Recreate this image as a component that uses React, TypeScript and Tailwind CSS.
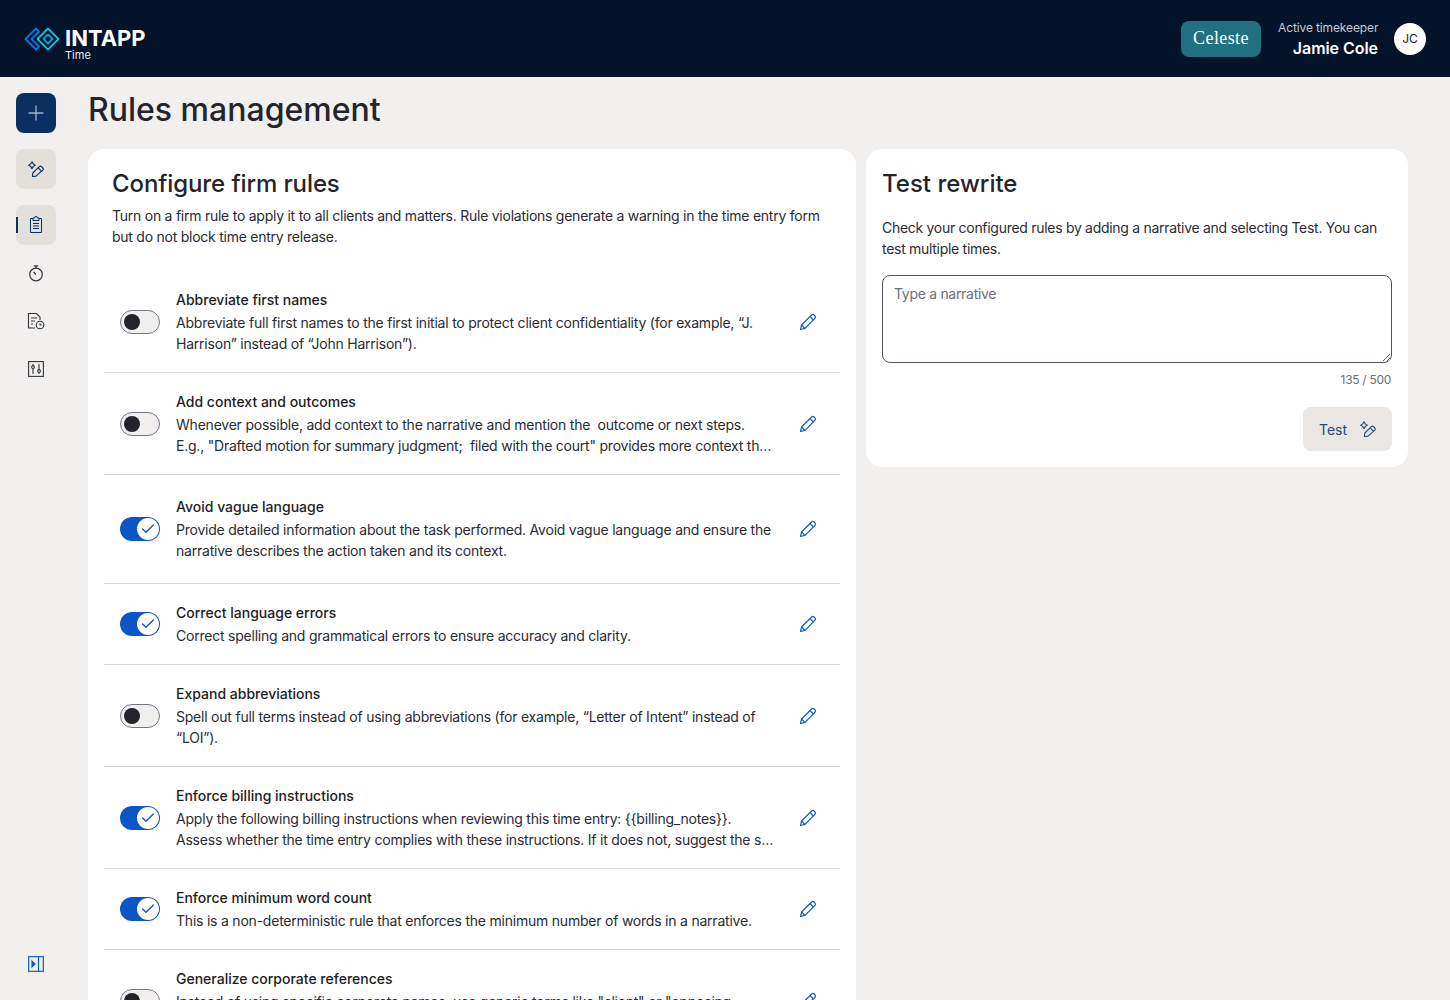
import React from "react";
import { Check, Plus } from "lucide-react";

const rules = [
  { title: "Abbreviate first names", on: false, h: "h-[102px]", lines: ["Abbreviate full first names to the first initial to protect client confidentiality (for example, “J.", "Harrison” instead of “John Harrison”)."] },
  { title: "Add context and outcomes", on: false, h: "h-[102px]", lines: ["Whenever possible, add context to the narrative and mention the  outcome or next steps.", "E.g., \"Drafted motion for summary judgment;  filed with the court\" provides more context than \"Drafted motion\""] },
  { title: "Avoid vague language", on: true, h: "h-[109px]", lines: ["Provide detailed information about the task performed. Avoid vague language and ensure the", "narrative describes the action taken and its context."] },
  { title: "Correct language errors", on: true, h: "h-[81px]", lines: ["Correct spelling and grammatical errors to ensure accuracy and clarity."] },
  { title: "Expand abbreviations", on: false, h: "h-[102px]", lines: ["Spell out full terms instead of using abbreviations (for example, “Letter of Intent” instead of", "“LOI”)."] },
  { title: "Enforce billing instructions", on: true, h: "h-[102px]", lines: ["Apply the following billing instructions when reviewing this time entry: {{billing_notes}}.", "Assess whether the time entry complies with these instructions. If it does not, suggest the specific changes"] },
  { title: "Enforce minimum word count", on: true, h: "h-[81px]", lines: ["This is a non-deterministic rule that enforces the minimum number of words in a narrative."] },
  { title: "Generalize corporate references", on: false, h: "h-[102px]", lines: ["Instead of using specific corporate names, use generic terms like \"client\" or \"opposing", "party\" where the identity of the company is not needed."] },
];

function Sparkle({ className }: { className?: string }) {
  return (
    <svg viewBox="0 0 16 16" fill="none" stroke="currentColor" strokeWidth="1.1" strokeLinejoin="round" strokeLinecap="round" className={className}>
      <path d="M4 .8 5.3 2.9 7.3 4.2 5.3 5.4 4 7.6 2.7 5.4 .7 4.2 2.7 2.9Z" />
      <path d="M4.4 15.5 4.8 12 11.4 5.7a1.5 1.5 0 0 1 2.1 0l1.3 1.3a1.5 1.5 0 0 1 0 2.1L8 15.1Z" />
      <path d="M10.2 6.9 13.6 10.3" />
    </svg>
  );
}

function Pencil() {
  return (
    <svg viewBox="0 0 18 18" fill="none" stroke="#0b5cc9" strokeWidth="1.2" strokeLinejoin="round" className="w-[18px] h-[18px]">
      <path d="M1.5 16.5 2.6 12 12.6 2a1.8 1.8 0 0 1 2.5 0l.8.8a1.8 1.8 0 0 1 0 2.5L6 15.4Z" />
      <path d="M11 3.6 14.4 7M2.6 12 6 15.4" />
    </svg>
  );
}

function Toggle({ on }: { on: boolean }) {
  if (on) {
    return (
      <div className="w-10 h-6 rounded-full bg-[#0b55c4] flex items-center justify-end px-[1px] shrink-0">
        <div className="w-[22px] h-[22px] rounded-full bg-white flex items-center justify-center">
          <Check className="w-4 h-4 text-[#0b55c4]" strokeWidth={2} />
        </div>
      </div>
    );
  }
  return (
    <div className="w-10 h-6 rounded-full bg-[#f1efed] border border-[#77758a] flex items-center px-[3px] shrink-0">
      <div className="w-4 h-4 rounded-full bg-[#23232b]" />
    </div>
  );
}

function Row({ rule, last }: { rule: (typeof rules)[number]; last: boolean }) {
  return (
    <div className={`${rule.h} flex items-center pl-4 pr-[23px] shrink-0 ${last ? "" : "border-b border-[#d9d8de]"}`}>
      <Toggle on={rule.on} />
      <div className="ml-4 w-[600px] min-w-0">
        <div className="text-[14px] leading-[20px] font-medium text-[#1d1d24] mb-[2px]">{rule.title}</div>
        {rule.lines.map((line, i) => (
          <div key={i} className="text-[14px] leading-[21px] text-[#2b2b33] truncate whitespace-pre tracking-[-0.22px]">{line}</div>
        ))}
      </div>
      <div className="ml-auto"><Pencil /></div>
    </div>
  );
}

function SideIcon({ active, marker, children }: { active?: boolean; marker?: boolean; children: React.ReactNode }) {
  return (
    <div className="relative w-10 h-10 flex items-center justify-center">
      {marker && <div className="absolute left-0 top-[12px] w-[2px] h-4 bg-[#0a2f61]" />}
      <div className={`w-10 h-10 rounded-lg flex items-center justify-center text-[#0a2f61] ${active ? "bg-[#e3dfdb]" : ""}`}>
        {children}
      </div>
    </div>
  );
}

export default function App() {
  return (
    <div className="h-screen overflow-hidden bg-[#f1f0ee] flex flex-col font-['Inter',sans-serif]">
      <header className="h-[77px] shrink-0 bg-[#02132a] flex items-center pl-6 pr-6">
        <svg viewBox="0 0 36 24" fill="none" strokeWidth="1.8" strokeLinejoin="round" className="w-9 h-6">
          <path d="M12 1.5 1.5 12 12 22.5 15 19.5 7.5 12 15 4.5Z" stroke="#0b78e3" />
          <path d="M24 1.5 34.5 12 24 22.5 13.5 12Z" stroke="#13c4cf" />
          <path d="M24 7.5 28.5 12 24 16.5 19.5 12Z" stroke="#0b9fe0" />
        </svg>
        <div className="ml-[5px] text-white">
          <div className="text-[22px] leading-[22px] font-bold mt-[10px]">INTAPP</div>
          <div className="text-[11px] leading-[12px] text-[#e8ecf2]">Time</div>
        </div>
        <div className="ml-auto flex items-center">
          <div className="w-20 h-9 rounded-lg bg-[#20707f] text-white flex items-center justify-center text-[18px] font-['Liberation_Serif',serif] tracking-[0.4px]">Celeste</div>
          <div className="ml-[17px] w-[100px] text-right mt-[2px]">
            <div className="text-[12px] leading-[16px] text-[#c6cbd3] tracking-[-0.12px] whitespace-nowrap">Active timekeeper</div>
            <div className="text-[16px] leading-[22px] font-semibold text-white mt-[1px] tracking-[-0.05px]">Jamie Cole</div>
          </div>
          <div className="ml-4 w-8 h-8 rounded-full bg-white text-[#1d1d24] text-[12px] flex items-center justify-center">JC</div>
        </div>
      </header>

      <div className="flex flex-1 min-h-0">
        <aside className="w-[72px] shrink-0 pl-4 pt-4 pb-4 flex flex-col">
          <div className="w-10 h-10 rounded-lg bg-[#0a2f61] flex items-center justify-center">
            <Plus className="w-6 h-6 text-[#9fb2c9]" strokeWidth={1.3} />
          </div>
          <div className="mt-4"><SideIcon active><Sparkle className="w-4 h-4" /></SideIcon></div>
          <div className="mt-4"><SideIcon active marker>
            <svg viewBox="0 0 20 20" fill="none" stroke="currentColor" strokeWidth="1" className="w-5 h-5">
              <path d="M7 3.5H4.5v14h11v-14H13" />
              <path d="M7 5.5V3h1.5a1.5 1.5 0 0 1 3 0H13v2.5Z" />
              <path d="M7 8.5h6M7 11h6M7 13.5h6" />
            </svg>
          </SideIcon></div>
          <div className="mt-2"><div className="w-10 h-10 flex items-center justify-center">
            <svg viewBox="0 0 20 20" fill="none" stroke="#33333b" strokeWidth="1.2" className="w-5 h-5">
              <circle cx="10" cy="11.5" r="6.3" />
              <path d="M7.8 2.8h4.4M10 2.8v2.4M7.6 9l2.4 2.5" />
            </svg>
          </div></div>
          <div className="mt-2"><div className="w-10 h-10 flex items-center justify-center">
            <svg viewBox="0 0 20 20" fill="none" stroke="#33333b" strokeWidth="1.1" className="w-5 h-5">
              <path d="M9 17H2.5V2.5h8L14 6v3" />
              <path d="M5 7h6M5 10h4M5 13h2" />
              <circle cx="14" cy="14" r="3.8" />
              <path d="M14 12.2V14h1.6" />
            </svg>
          </div></div>
          <div className="mt-2"><div className="w-10 h-10 flex items-center justify-center">
            <svg viewBox="0 0 16 16" fill="none" stroke="#33333b" strokeWidth="1.1" className="w-4 h-4">
              <rect x="0.6" y="0.6" width="14.8" height="14.8" />
              <path d="M5 3v10M11 3v10" />
              <circle cx="5" cy="6" r="1.4" fill="#f1f0ee" />
              <circle cx="11" cy="10" r="1.4" fill="#f1f0ee" />
            </svg>
          </div></div>
          <div className="mt-auto w-10 h-10 flex items-center justify-center">
            <svg viewBox="0 0 16 16" fill="none" stroke="#0b5cc9" strokeWidth="1.2" className="w-4 h-4">
              <rect x="0.7" y="0.7" width="14.6" height="14.6" />
              <path d="M10.5 1v14" />
              <path d="M4 5.2 7 8 4 10.8Z" fill="#0b5cc9" />
            </svg>
          </div>
        </aside>

        <main className="flex-1 min-w-0 pl-4 pr-[42px]">
          <h1 className="text-[32px] leading-[40px] font-medium text-[#24242c] mt-[13px]">Rules management</h1>
          <div className="mt-[19px] flex gap-[10px] items-start">
            <section className="w-[768px] shrink-0 bg-white rounded-t-2xl px-4 h-[900px]">
              <div className="px-2 pt-[18px]">
                <h2 className="text-[24px] leading-[34px] font-medium text-[#24242c] tracking-[-0.1px]">Configure firm rules</h2>
                <p className="mt-[4px] text-[14px] leading-[21px] text-[#2b2b33] tracking-[-0.25px]">Turn on a firm rule to apply it to all clients and matters. Rule violations generate a warning in the time entry form<br />but do not block time entry release.</p>
              </div>
              <div className="mt-[24px] flex flex-col">
                {rules.map((r, i) => <Row key={r.title} rule={r} last={i === rules.length - 1} />)}
              </div>
            </section>

            <section className="w-[542px] h-[318px] shrink-0 bg-white rounded-2xl px-4 pt-[18px]">
              <h2 className="text-[24px] leading-[34px] font-medium text-[#24242c]">Test rewrite</h2>
              <p className="mt-[16px] text-[14px] leading-[21px] text-[#2b2b33] tracking-[-0.29px]">Check your configured rules by adding a narrative and selecting Test. You can<br />test multiple times.</p>
              <textarea placeholder="Type a narrative" className="mt-[16px] w-[510px] h-[88px] block rounded-lg border border-[#54525f] px-[11px] py-[8px] text-[14px] leading-[20px] tracking-[-0.3px] placeholder:text-[#6f6e78]" />
              <div className="mt-[9px] pr-[1px] text-right text-[12px] leading-[16px] text-[#6f6e78] tracking-[-0.3px]">135 / 500</div>
              <div className="mt-[19px] flex justify-end">
                <button className="w-[89px] h-11 rounded-lg bg-[#e9e6e3] text-[#274a75] text-[14px] flex items-center justify-center gap-[13px]">
                  Test <Sparkle className="w-4 h-4" />
                </button>
              </div>
            </section>
          </div>
        </main>
      </div>
    </div>
  );
}
